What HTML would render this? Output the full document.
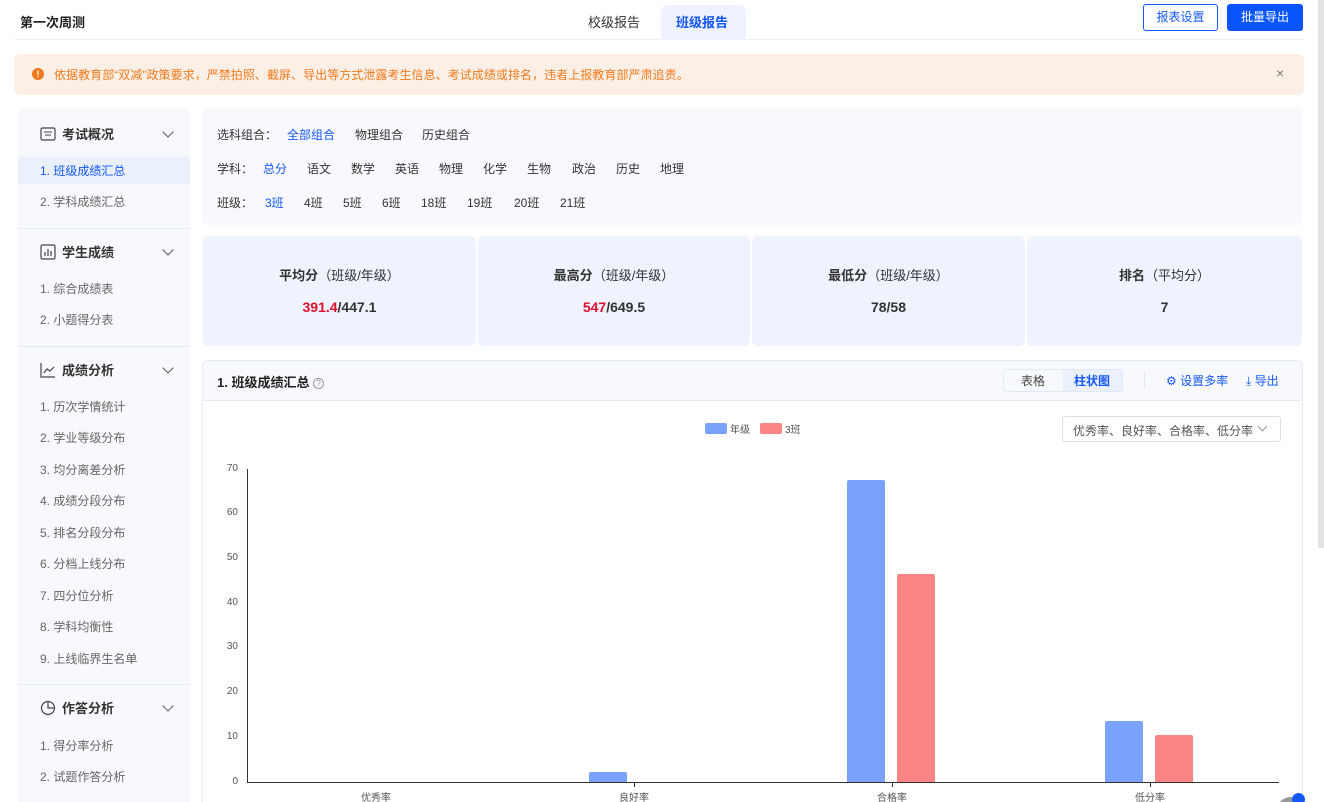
<!DOCTYPE html>
<html><head><meta charset="utf-8"><style>
*{margin:0;padding:0;box-sizing:border-box}
html,body{width:1324px;height:802px;overflow:hidden}
body{background:#fff;font-family:"Liberation Sans","Noto Sans CJK SC",sans-serif;font-size:12px;color:#333;position:relative}
.a{position:absolute}
.side{left:18px;top:107px;width:172px;height:700px;background:#f7f9fc;border-radius:6px}
.sh{position:absolute;left:22px;font-size:13px;font-weight:bold;color:#333;display:flex;align-items:center;gap:6px}
.si{position:absolute;left:22px;font-size:12px;color:#666}
.chev{position:absolute;left:146px;width:8px;height:8px;border-right:1.3px solid #555;border-bottom:1.3px solid #555;transform:rotate(45deg)}
.div{position:absolute;left:0;width:172px;height:1px;background:#e2e9f7}
.fl{position:absolute;font-size:12px;color:#333}
.card{position:absolute;top:236px;height:110px;background:#eef3fd;border-radius:6px;text-align:center}
.card .t{margin-top:29px;font-size:13px;color:#333}
.card .t b{font-weight:bold}
.card .v{margin-top:15px;font-size:14px;font-weight:bold;color:#333}
.yl{position:absolute;width:30px;text-align:right;font-size:10px;color:#555}
.xl{position:absolute;width:60px;text-align:center;font-size:10px;color:#555}
</style></head><body>
<div class="a" style="left:20px;top:12px;font-size:13px;font-weight:bold;color:#222">第一次周测</div>
<div class="a" style="left:14px;top:39px;width:1290px;height:1px;background:#eef0f6"></div>
<div class="a" style="left:588px;top:12px;font-size:13px;color:#333">校级报告</div>
<div class="a" style="left:661px;top:5px;width:85px;height:35px;background:#eef3ff;border-radius:6px 6px 0 0"></div>
<div class="a" style="left:676px;top:12px;font-size:13px;font-weight:bold;color:#1557ff">班级报告</div>
<div class="a" style="left:1143px;top:4px;width:75px;height:27px;border:1px solid #1557ff;border-radius:3px;color:#1557ff;font-size:12px;text-align:center;line-height:25px">报表设置</div>
<div class="a" style="left:1227px;top:4px;width:76px;height:27px;background:#0a55ff;border-radius:3px;color:#fff;font-size:12px;text-align:center;line-height:27px">批量导出</div>
<div class="a" style="left:1318px;top:0;width:6px;height:548px;background:#c8c8c8;opacity:.5"></div>

<div class="a" style="left:14px;top:54px;width:1290px;height:41px;background:#fcefe6;border-radius:6px"></div>
<div class="a" style="left:32px;top:68px;width:12px;height:12px;border-radius:50%;background:#f07b1d;color:#fff;font-size:9px;font-weight:bold;text-align:center;line-height:12px">!</div>
<div class="a" style="left:54px;top:66px;font-size:12px;color:#f07b1d;letter-spacing:0.05px">依据教育部“双减”政策要求，严禁拍照、截屏、导出等方式泄露考生信息、考试成绩或排名，违者上报教育部严肃追责。</div>
<div class="a" style="left:1276px;top:65px;font-size:14px;color:#777">×</div>

<div class="a side">
<div class="sh" style="top:17px"><svg width="16" height="14" viewBox="0 0 16 14"><rect x="1" y="1" width="14" height="12" rx="1.5" fill="none" stroke="#444" stroke-width="1.2"/><path d="M4 5h8M5 8h6" stroke="#444" stroke-width="1"/></svg>考试概况</div><div class="chev" style="top:21px"></div>
<div class="a" style="left:0;top:50px;width:172px;height:27px;background:#eaf0fc"></div>
<div class="si" style="top:55px;color:#1557ff">1. 班级成绩汇总</div>
<div class="si" style="top:86px">2. 学科成绩汇总</div>
<div class="div" style="top:121px"></div>
<div class="sh" style="top:135px"><svg width="16" height="16" viewBox="0 0 16 16"><rect x="1" y="1" width="14" height="14" rx="1.5" fill="none" stroke="#444" stroke-width="1.2"/><path d="M5 12V8M8 12V5M11 12V7" stroke="#444" stroke-width="1.2"/></svg>学生成绩</div><div class="chev" style="top:139px"></div>
<div class="si" style="top:173px">1. 综合成绩表</div>
<div class="si" style="top:204px">2. 小题得分表</div>
<div class="div" style="top:239px"></div>
<div class="sh" style="top:253px"><svg width="16" height="16" viewBox="0 0 16 16"><path d="M1 1v14h14" fill="none" stroke="#444" stroke-width="1.2"/><path d="M4 11l3-4 3 2 4-4" fill="none" stroke="#444" stroke-width="1.2"/></svg>成绩分析</div><div class="chev" style="top:257px"></div>
<div class="si" style="top:291px">1. 历次学情统计</div>
<div class="si" style="top:322px">2. 学业等级分布</div>
<div class="si" style="top:354px">3. 均分离差分析</div>
<div class="si" style="top:385px">4. 成绩分段分布</div>
<div class="si" style="top:417px">5. 排名分段分布</div>
<div class="si" style="top:448px">6. 分档上线分布</div>
<div class="si" style="top:480px">7. 四分位分析</div>
<div class="si" style="top:511px">8. 学科均衡性</div>
<div class="si" style="top:543px">9. 上线临界生名单</div>
<div class="div" style="top:577px"></div>
<div class="sh" style="top:591px"><svg width="16" height="16" viewBox="0 0 16 16"><circle cx="8" cy="8" r="6.5" fill="none" stroke="#444" stroke-width="1.2"/><path d="M8 1.5V8h6.5" fill="none" stroke="#444" stroke-width="1.2"/></svg>作答分析</div><div class="chev" style="top:595px"></div>
<div class="si" style="top:630px">1. 得分率分析</div>
<div class="si" style="top:661px">2. 试题作答分析</div>
</div>

<div class="a" style="left:202px;top:107px;width:1101px;height:118px;background:#f7f9fc;border-radius:6px"></div>
<div class="fl" style="left:217px;top:126px">选科组合：</div>
<div class="fl" style="left:287px;top:126px;color:#1557ff">全部组合</div>
<div class="fl" style="left:355px;top:126px">物理组合</div>
<div class="fl" style="left:422px;top:126px">历史组合</div>
<div class="fl" style="left:217px;top:160px">学科：</div>
<div class="fl" style="left:263px;top:160px;color:#1557ff">总分</div>
<div class="fl" style="left:307px;top:160px">语文</div>
<div class="fl" style="left:351px;top:160px">数学</div>
<div class="fl" style="left:395px;top:160px">英语</div>
<div class="fl" style="left:439px;top:160px">物理</div>
<div class="fl" style="left:483px;top:160px">化学</div>
<div class="fl" style="left:527px;top:160px">生物</div>
<div class="fl" style="left:572px;top:160px">政治</div>
<div class="fl" style="left:616px;top:160px">历史</div>
<div class="fl" style="left:660px;top:160px">地理</div>
<div class="fl" style="left:217px;top:194px">班级：</div>
<div class="fl" style="left:265px;top:194px;color:#1557ff">3班</div>
<div class="fl" style="left:304px;top:194px">4班</div>
<div class="fl" style="left:343px;top:194px">5班</div>
<div class="fl" style="left:382px;top:194px">6班</div>
<div class="fl" style="left:421px;top:194px">18班</div>
<div class="fl" style="left:467px;top:194px">19班</div>
<div class="fl" style="left:514px;top:194px">20班</div>
<div class="fl" style="left:560px;top:194px">21班</div>

<div class="card" style="left:203px;width:273px"><div class="t"><b>平均分</b>（班级/年级）</div><div class="v"><span style="color:#e0102c">391.4</span>/447.1</div></div>
<div class="card" style="left:478px;width:272px"><div class="t"><b>最高分</b>（班级/年级）</div><div class="v"><span style="color:#e0102c">547</span>/649.5</div></div>
<div class="card" style="left:752px;width:273px"><div class="t"><b>最低分</b>（班级/年级）</div><div class="v">78/58</div></div>
<div class="card" style="left:1027px;width:275px"><div class="t"><b>排名</b>（平均分）</div><div class="v">7</div></div>

<div class="a" style="left:202px;top:360px;width:1101px;height:450px;border:1px solid #e6ecf7;border-radius:6px;background:#fff"></div>
<div class="a" style="left:203px;top:361px;width:1099px;height:40px;background:#f7f9fc;border-bottom:1px solid #e6ecf7;border-radius:6px 6px 0 0"></div>
<div class="a" style="left:217px;top:372px;font-size:13px;font-weight:bold;color:#222">1. 班级成绩汇总 <span style="display:inline-block;width:11px;height:11px;border:1px solid #999;border-radius:50%;font-size:8px;color:#999;text-align:center;line-height:10px;font-weight:normal;vertical-align:1px">?</span></div>
<div class="a" style="left:1003px;top:369px;width:120px;height:23px;border:1px solid #e1e8f7;border-radius:3px;background:#f7f9fc"></div>
<div class="a" style="left:1063px;top:370px;width:59px;height:21px;background:#eaf0fc"></div>
<div class="a" style="left:1021px;top:372px;font-size:12px;color:#444">表格</div>
<div class="a" style="left:1074px;top:372px;font-size:12px;color:#1557ff;font-weight:bold">柱状图</div>
<div class="a" style="left:1144px;top:373px;width:1px;height:15px;background:#dde4f2"></div>
<div class="a" style="left:1166px;top:372px;font-size:12px;color:#1557ff">⚙ 设置多率</div>
<div class="a" style="left:1246px;top:372px;font-size:12px;color:#1557ff">⤓ 导出</div>

<div class="a" style="left:705px;top:423px;width:22px;height:11px;background:#7aa1fc;border-radius:2px"></div>
<div class="a" style="left:730px;top:421px;font-size:10px;color:#555">年级</div>
<div class="a" style="left:760px;top:423px;width:22px;height:11px;background:#fb8584;border-radius:2px"></div>
<div class="a" style="left:785px;top:421px;font-size:10px;color:#555">3班</div>
<div class="a" style="left:1062px;top:416px;width:219px;height:26px;border:1px solid #dcdfe6;border-radius:3px;font-size:12px;color:#555;padding:5px 0 0 10px">优秀率、良好率、合格率、低分率</div>
<div class="a" style="left:1259px;top:423px;width:7px;height:7px;border-right:1px solid #999;border-bottom:1px solid #999;transform:rotate(45deg)"></div>

<div class="yl" style="left:208px;top:463px">70</div>
<div class="yl" style="left:208px;top:507px">60</div>
<div class="yl" style="left:208px;top:552px">50</div>
<div class="yl" style="left:208px;top:597px">40</div>
<div class="yl" style="left:208px;top:641px">30</div>
<div class="yl" style="left:208px;top:686px">20</div>
<div class="yl" style="left:208px;top:731px">10</div>
<div class="yl" style="left:208px;top:776px">0</div>
<div class="a" style="left:247px;top:469px;width:1px;height:314px;background:#333"></div>
<div class="a" style="left:247px;top:782px;width:1032px;height:1px;background:#333"></div>
<div class="a" style="left:634px;top:782px;width:1px;height:5px;background:#333"></div>
<div class="a" style="left:892px;top:782px;width:1px;height:5px;background:#333"></div>
<div class="a" style="left:1150px;top:782px;width:1px;height:5px;background:#333"></div>
<div class="a" style="left:589px;top:772px;width:38px;height:10px;background:#7aa1fc;border-radius:2px 2px 0 0"></div>
<div class="a" style="left:847px;top:480px;width:38px;height:302px;background:#7aa1fc;border-radius:2px 2px 0 0"></div>
<div class="a" style="left:897px;top:574px;width:38px;height:208px;background:#fb8584;border-radius:2px 2px 0 0"></div>
<div class="a" style="left:1105px;top:721px;width:38px;height:61px;background:#7aa1fc;border-radius:2px 2px 0 0"></div>
<div class="a" style="left:1155px;top:735px;width:38px;height:47px;background:#fb8584;border-radius:2px 2px 0 0"></div>
<div class="xl" style="left:346px;top:789px">优秀率</div>
<div class="xl" style="left:604px;top:789px">良好率</div>
<div class="xl" style="left:862px;top:789px">合格率</div>
<div class="xl" style="left:1120px;top:789px">低分率</div>
<div class="a" style="left:1276px;top:797px;width:30px;height:30px;border-radius:50%;background:#999"></div>
<div class="a" style="left:1292px;top:793px;width:13px;height:13px;border-radius:50%;background:#1557ff"></div>
</body></html>
